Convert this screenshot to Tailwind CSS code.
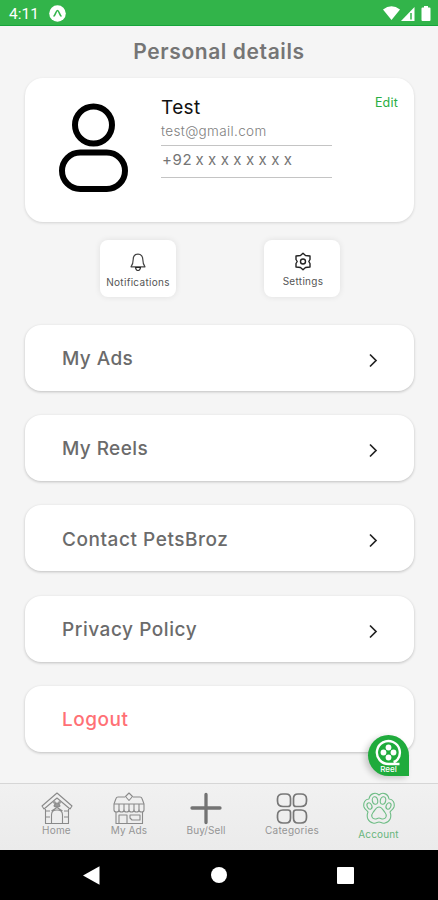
<!DOCTYPE html>
<html lang="en">
<head>
    <meta charset="UTF-8">
    <meta name="viewport" content="width=device-width, initial-scale=1.0">
    <title>Personal details</title>
    <script src="https://cdn.jsdelivr.net/npm/@tailwindcss/browser@4"></script>
</head>
<body class="bg-[#f5f5f5] font-['Inter','Liberation_Sans',sans-serif]">
<div class="relative w-[438px] h-[900px] flex flex-col overflow-hidden">

    <!-- Status bar -->
    <header class="h-[26px] shrink-0 bg-[#32b44a] border-b border-[#16a53a] flex items-center pl-[9px] pr-[7px] pt-[3px] text-white">
        <span class="pt-[2px] font-['Roboto',sans-serif] text-[15.5px] leading-none">4:11</span>
        <svg class="ml-[10px] -mt-px w-[17px] h-[17px]" viewBox="0 0 17 17">
            <circle cx="8.5" cy="8.5" r="8.3" fill="#fff"/>
            <path d="M5 11C6.5 9.5 7.2 5.5 8.5 5.5S10.5 9.5 12 11" fill="none" stroke="#32b44a" stroke-width="1.5" stroke-linecap="round"/>
        </svg>
        <svg class="ml-auto -mt-[2px] w-[17px] h-[14px]" viewBox="0 0 17 14">
            <path d="M0 3.5Q8.5-3 17 3.5L8.5 14Z" fill="#fff"/>
        </svg>
        <svg class="ml-px -mt-px w-[14px] h-[14px]" viewBox="0 0 14 14">
            <path d="M0 14L13.5 0V14Z" fill="#fff"/>
            <path d="M10 6V12.5" stroke="#32b44a" stroke-width="1.5"/>
        </svg>
        <svg class="ml-[6px] -mt-[2px] w-[10px] h-[15px]" viewBox="0 0 10 15">
            <path d="M3 0H7V1.5H8.5Q9.5 1.5 9.5 2.5V14Q9.5 15 8.5 15H1.5Q.5 15 .5 14V2.5Q.5 1.5 1.5 1.5H3Z" fill="#fff"/>
        </svg>
    </header>

    <h1 class="h-[52px] shrink-0 text-center text-[21px] leading-[51px] font-semibold tracking-[0.6px] text-[#757575]">Personal details</h1>

    <main class="px-[25px] flex flex-col shrink-0">
        <!-- Profile card -->
        <section class="h-[144px] w-[389px] bg-white rounded-[18px] shadow-[0_1px_3px_rgba(0,0,0,0.14)] flex">
            <svg class="ml-[34px] mt-[25px] w-[69px] h-[90px] shrink-0" viewBox="0 0 69 90" fill="none" stroke="#000" stroke-width="6">
                <circle cx="34.5" cy="22" r="18.5"/>
                <rect x="3" y="49.5" width="63" height="36.5" rx="18.25"/>
            </svg>
            <div class="ml-[33px] w-[171px] pt-[18px]">
                <div class="text-[19px] leading-[23px] tracking-[0.35px] text-[#111]">Test</div>
                <div class="h-[27px] pt-[3px] border-b border-[#c4c4c4] text-[13.5px] leading-[18px] tracking-[0.35px] font-light text-[#808080]">test@gmail.com</div>
                <div class="h-[32px] pl-[1px] border-b border-[#c4c4c4] text-[15px] leading-[28px] tracking-[0.6px] text-[#757575] whitespace-nowrap">+92 <span class="-ml-[1.5px] tracking-[0.1px]">x x x x x x x x</span></div>
            </div>
            <a class="ml-auto mr-[16px] mt-[17px] text-[12.5px] leading-[15px] tracking-[0.2px] text-[#28ae42]">Edit</a>
        </section>

        <!-- Shortcuts -->
        <div class="mt-[18px] px-[75px] flex justify-between w-[390px]">
            <div class="w-[76px] h-[57px] bg-white rounded-[8px] shadow-[0_0_6px_rgba(0,0,0,0.09)] flex flex-col items-center">
                <svg class="mt-[13px] w-[16px] h-[19px]" viewBox="0 0 16 19" fill="none" stroke="#444" stroke-width="1.2" stroke-linejoin="round">
                    <path d="M8 1.2C4.5 1.2 3.2 3.7 3.2 6.5C3.2 10 2.7 11.5 1 13.8H15C13.3 11.5 12.8 10 12.8 6.5C12.8 3.7 11.5 1.2 8 1.2Z"/>
                    <path d="M5.5 14.5Q6 17.5 8 17.5T10.5 14.5Z" stroke="#222"/>
                </svg>
                <span class="mt-[4px] text-[10px] leading-[13px] tracking-[0.3px] text-[#555]">Notifications</span>
            </div>
            <div class="w-[76px] h-[57px] bg-white rounded-[8px] shadow-[0_0_6px_rgba(0,0,0,0.09)] flex flex-col items-center">
                <svg class="mt-[12px] ml-[2px] w-[18px] h-[19px]" viewBox="0 0 18 19" fill="none" stroke="#222" stroke-width="1.4" stroke-linejoin="round">
                    <path d="M6.5 3.5L9 1.2L11.5 3.5L16 4V7.5L14.8 9.5L16 11.5V15L11.5 15.5L9 17.8L6.5 15.5L2 15V11.5L3.2 9.5L2 7.5V4Z"/>
                    <circle cx="9" cy="9.5" r="2.5"/>
                </svg>
                <span class="mt-[4px] ml-[2px] text-[10px] leading-[13px] tracking-[0.3px] text-[#555]">Settings</span>
            </div>
        </div>

        <!-- Menu -->
        <nav class="mt-[27.5px] flex flex-col gap-[24.4px] text-[19px] font-medium text-[#6b6b6b]">
            <a class="h-[66px] w-[389px] bg-white rounded-[16px] shadow-[0_1px_3px_rgba(0,0,0,0.22)] flex items-center justify-between pl-[37px] pr-[35px]">
                <span class="pt-[3px] tracking-[0.4px]">My Ads</span>
                <svg class="mt-[5px] w-[11px] h-[15px]" viewBox="0 0 11 15"><path d="M2 1.5L8 7.5L2 13.5" fill="none" stroke="#222" stroke-width="1.7"/></svg>
            </a>
            <a class="h-[66px] w-[389px] bg-white rounded-[16px] shadow-[0_1px_3px_rgba(0,0,0,0.22)] flex items-center justify-between pl-[37px] pr-[35px]">
                <span class="pt-[3px] tracking-[0.4px]">My Reels</span>
                <svg class="mt-[5px] w-[11px] h-[15px]" viewBox="0 0 11 15"><path d="M2 1.5L8 7.5L2 13.5" fill="none" stroke="#222" stroke-width="1.7"/></svg>
            </a>
            <a class="h-[66px] w-[389px] bg-white rounded-[16px] shadow-[0_1px_3px_rgba(0,0,0,0.22)] flex items-center justify-between pl-[37px] pr-[35px]">
                <span class="pt-[3px] tracking-[0.55px]">Contact PetsBroz</span>
                <svg class="mt-[5px] w-[11px] h-[15px]" viewBox="0 0 11 15"><path d="M2 1.5L8 7.5L2 13.5" fill="none" stroke="#222" stroke-width="1.7"/></svg>
            </a>
            <a class="h-[66px] w-[389px] bg-white rounded-[16px] shadow-[0_1px_3px_rgba(0,0,0,0.22)] flex items-center justify-between pl-[37px] pr-[35px]">
                <span class="pt-[3px] tracking-[0.55px]">Privacy Policy</span>
                <svg class="mt-[5px] w-[11px] h-[15px]" viewBox="0 0 11 15"><path d="M2 1.5L8 7.5L2 13.5" fill="none" stroke="#222" stroke-width="1.7"/></svg>
            </a>
            <a class="h-[66px] w-[389px] bg-white rounded-[16px] shadow-[0_1px_3px_rgba(0,0,0,0.22)] flex items-center pl-[37px] text-[#ff7075]">
                <span class="pt-[3px] tracking-[0.5px]">Logout</span>
            </a>
        </nav>
    </main>

    <!-- Floating reels button -->
    <div class="absolute left-[368px] top-[735px] w-[41px] h-[41px] rounded-full rounded-br-none bg-[#1fab3c] shadow-[-3px_2px_6px_rgba(0,0,0,0.2)] flex flex-col items-center">
        <svg class="mt-[4px] w-[27px] h-[27px] shrink-0" viewBox="0 0 27 27" fill="#fff">
            <path d="M24.5 25H14A11.5 11.5 0 1 1 22.5 20.5Q21 22.500 18.500 23" fill="none" stroke="#fff" stroke-width="2.4"/>
            <circle cx="13.5" cy="8.5" r="2.9"/>
            <circle cx="8.5" cy="13.5" r="2.9"/>
            <circle cx="18.5" cy="13.5" r="2.9"/>
            <circle cx="13.5" cy="18.5" r="2.9"/>
        </svg>
        <span class="-mt-px text-[8px] leading-[8px] font-medium text-white">Reel</span>
    </div>

    <!-- Bottom tabs -->
    <footer class="mt-auto h-[67px] shrink-0 border-t border-[#d6d6d6] bg-linear-to-b from-[#f1f1f1] to-[#ebebeb] flex pl-[21px] text-[10px] leading-[12px] text-[#959595]">
        <div class="w-[71px] shrink-0 pt-[8px] flex flex-col items-center">
            <svg class="w-[32px] h-[33px]" viewBox="0 0 32 33" fill="none" stroke="#8a8a8a" stroke-width="1.1" stroke-linejoin="round">
                <path d="M1 14L16 1L31 14L29 17L16 6L3 17Z"/>
                <path d="M4.5 17V31.5H27.5V17M4.5 19H9M23 19H27.5M4.5 25H9M23 25H27.5"/>
                <path d="M10.5 31.5V23Q10.5 18 16 18T21.5 23V31.5M10.5 19L16 15.5L21.5 19"/>
                <path d="M13 14Q14 11 16 11T19 14Q18 15.5 16 14.5Q14 15.5 13 14Z" fill="#999"/>
                <circle cx="13.5" cy="10.5" r=".8"/><circle cx="18.5" cy="10.5" r=".8"/>
            </svg>
            <span class="-mt-px tracking-[0.2px]">Home</span>
        </div>
        <div class="w-[74px] shrink-0 pt-[8px] flex flex-col items-center">
            <svg class="w-[32px] h-[33px]" viewBox="0 0 32 33" fill="none" stroke="#8a8a8a" stroke-width="1.1" stroke-linejoin="round">
                <path d="M12 5H5Q3.5 5 3 6.5L1 12V18Q1 20 3.5 20T6 18Q6 20 8.5 20T11 18Q11 20 13.5 20T16 18Q16 20 18.5 20T21 18Q21 20 23.5 20T26 18Q26 20 28.5 20T31 18V12L29 6.5Q28.5 5 27 5H20"/>
                <path d="M1 12H31M6 12V18M11 12V18M16 12V18M21 12V18M26 12V18"/>
                <path d="M16 1L19.5 4.5L16 8.5L12.5 4.5Z"/>
                <path d="M3 20V31.5H29.5V20M6 31.5V23H14V31.5M17 23H27V28H19L17 26Z"/>
            </svg>
            <span class="-mt-px tracking-[0.1px]">My Ads</span>
        </div>
        <div class="w-[80px] shrink-0 pt-[8px] flex flex-col items-center">
            <svg class="w-[32px] h-[33px]" viewBox="0 0 32 33" fill="none" stroke="#737373" stroke-width="3.3" stroke-linecap="round">
                <path d="M16 2.5V30.5M2 16H30"/>
            </svg>
            <span class="-mt-px tracking-[0.1px]">Buy/Sell</span>
        </div>
        <div class="w-[92px] shrink-0 pt-[8px] flex flex-col items-center">
            <svg class="w-[32px] h-[33px]" viewBox="0 0 32 33" fill="none" stroke="#777" stroke-width="1.7">
                <path d="M7 2H10Q14.5 2 14.5 6.5V12Q14.5 14.5 12 14.5H7Q1.5 14.5 1.5 9V7Q1.5 2 7 2Z"/>
                <path d="M22 2H25Q30.5 2 30.5 7V9Q30.5 14.5 25 14.5H20Q17.5 14.5 17.5 12V6.5Q17.5 2 22 2Z"/>
                <path d="M7 18H12Q14.5 18 14.5 20.5V26Q14.5 31 10 31H7Q1.5 31 1.5 25.5V23.5Q1.5 18 7 18Z"/>
                <path d="M20 18H25Q30.5 18 30.5 23.5V25.5Q30.5 31 25 31H22Q17.5 31 17.5 26V20.5Q17.5 18 20 18Z"/>
            </svg>
            <span class="-mt-px tracking-[0.25px]">Categories</span>
        </div>
        <div class="w-[81px] shrink-0 pt-[8px] flex flex-col items-center text-[#67b57c]">
            <svg class="w-[32px] h-[33px]" viewBox="0 0 32 33" fill="none" stroke="#6fbd86" stroke-width="1.1" stroke-linejoin="round">
                <path d="M16 3C19 0 25 1 26 7C30 7 32 11 31 15C30 18 28 18 27 20C29 25 27 30 22 31C19 32 18 30 16 30C14 30 13 32 10 31C5 30 3 25 5 20C4 18 2 18 1 15C0 11 2 7 6 7C7 1 13 0 16 3Z"/>
                <ellipse cx="12" cy="8.5" rx="2.7" ry="3.8" transform="rotate(-10 12 8.5)"/>
                <ellipse cx="20" cy="8.5" rx="2.7" ry="3.8" transform="rotate(10 20 8.5)"/>
                <ellipse cx="6.5" cy="14" rx="2.3" ry="3.3" transform="rotate(-25 6.5 14)"/>
                <ellipse cx="25.5" cy="14" rx="2.3" ry="3.3" transform="rotate(25 25.5 14)"/>
                <path d="M16 15C19 15 20 18 22 20.5C24.5 23.5 23 27 20 27C18 27 17.5 26 16 26S14 27 12 27C9 27 7.5 23.5 10 20.5C12 18 13 15 16 15Z"/>
            </svg>
            <span class="mt-[3px] tracking-[0.15px]">Account</span>
        </div>
    </footer>

    <!-- System navigation -->
    <div class="h-[50px] shrink-0 bg-black flex items-center justify-between pl-[83px] pr-[84px]">
        <svg class="w-[17px] h-[19px]" viewBox="0 0 17 19"><path d="M0 9.5L16.5 .3V18.7Z" fill="#fff"/></svg>
        <div class="w-[16px] h-[16px] rounded-full bg-white"></div>
        <div class="w-[17px] h-[17px] rounded-[1px] bg-white"></div>
    </div>
</div>
</body>
</html>
